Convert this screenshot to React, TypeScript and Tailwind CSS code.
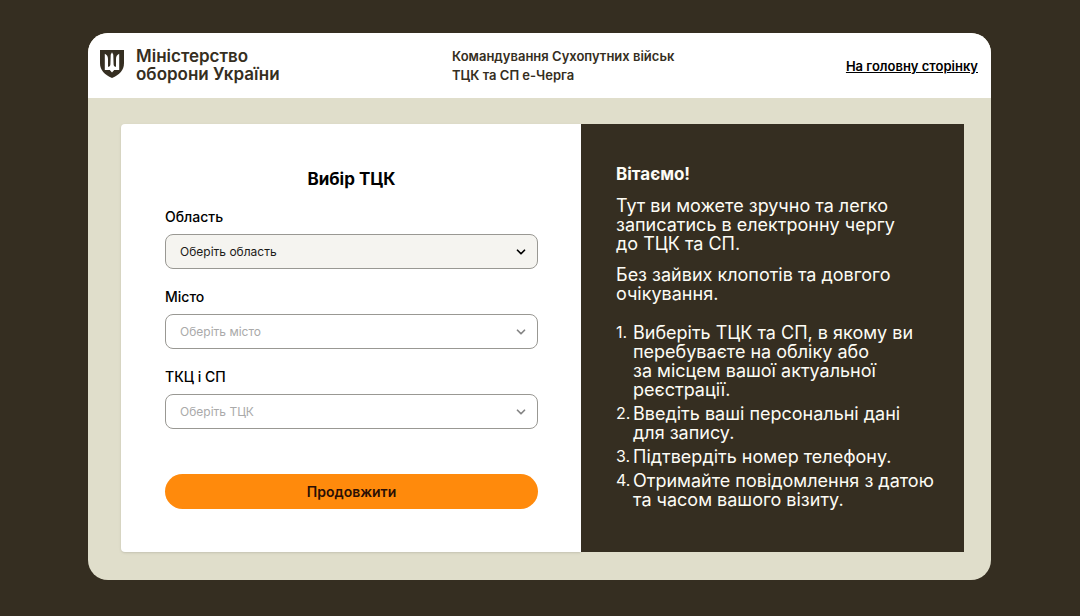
import { useState } from "react";
import { ChevronDown } from "lucide-react";

/* =========================
   DATA
========================= */
type Field = {
  id: string;
  label: string;
  placeholder: string;
  options: string[];
};

const FIELDS: Field[] = [
  {
    id: "region",
    label: "Область",
    placeholder: "Оберіть область",
    options: ["Київська", "Львівська", "Одеська"],
  },
  { id: "city", label: "Місто", placeholder: "Оберіть місто", options: [] },
  { id: "center", label: "ТКЦ і СП", placeholder: "Оберіть ТЦК", options: [] },
];

const STEPS: string[][] = [
  [
    "Виберіть ТЦК та СП, в якому ви",
    "перебуваєте на обліку або",
    "за місцем вашої актуальної",
    "реєстрації.",
  ],
  ["Введіть ваші персональні дані", "для запису."],
  ["Підтвердіть номер телефону."],
  ["Отримайте повідомлення з датою", "та часом вашого візиту."],
];

/* =========================
   SMALL PARTS
========================= */
function Emblem() {
  return (
    <svg viewBox="0 0 24 28" className="h-7 w-6 shrink-0" aria-hidden="true">
      <path d="M0 0H24V13C24 20.5 19.5 24.5 12 28C4.5 24.5 0 20.5 0 13Z" fill="#352e21" />
      <path
        d="M4.8 3.8C7 4.8 8 6.600 8 9V16.800C9.400 16.600 10.200 15.800 10.400 14.400L10.700 4.800L12 2.200L13.300 4.800L13.600 14.400C13.800 15.800 14.600 16.600 16 16.800V9C16 6.600 17 4.800 19.200 3.800V20H14.200L12 22.600L9.800 20H4.800Z"
        fill="#fff"
      />
    </svg>
  );
}

function Lines({ lines }: { lines: string[] }) {
  return (
    <>
      {lines.map((line) => (
        <span key={line} className="block">
          {line}
        </span>
      ))}
    </>
  );
}

/* =========================
   QUEUE PAGE
========================= */
export default function App() {
  const [region, setRegion] = useState("");

  return (
    <div className="min-h-screen bg-[#352e21] pt-[33px] pr-[89px] pb-9 pl-[88px] font-['Inter',sans-serif]">
      <div className="overflow-hidden rounded-[20px] bg-[#e0decb]">
        {/* HEADER */}
        <header className="grid grid-cols-[352px_1fr_auto] items-center bg-white py-3 pr-[13px] pl-3 text-[#352e21]">
          <div className="flex items-center gap-3 pb-[3px]">
            <Emblem />
            <div className="pt-px text-[17px] leading-[18px] font-semibold">
              Міністерство
              <br />
              оборони України
            </div>
          </div>
          <div className="pt-[2px] pb-px text-[13px] leading-[19px] font-semibold">
            Командування Сухопутних військ
            <br />
            ТЦК та СП е-Черга
          </div>
          <a href="#" className="text-[13px] leading-5 font-semibold text-black underline">
            На головну сторінку
          </a>
        </header>

        {/* CONTENT */}
        <main className="grid grid-cols-[460fr_383fr] pt-[26px] pr-[27px] pb-7 pl-[33px]">
          <form
            className="rounded-l bg-white pt-11 pr-[43px] pb-[43px] pl-11 shadow-sm"
            onSubmit={(e) => e.preventDefault()}
          >
            <h1 className="mb-[17px] text-center text-[17px] leading-[22px] font-bold text-black">
              Вибір ТЦК
            </h1>

            <div className="flex flex-col gap-[18px]">
              {FIELDS.map((f) => {
                const disabled = f.options.length === 0;
                return (
                  <div key={f.id}>
                    <label htmlFor={f.id} className="block text-sm leading-5 font-medium text-black">
                      {f.label}
                    </label>
                    <div className="relative mt-[7px]">
                      <select
                        id={f.id}
                        disabled={disabled}
                        value={disabled ? "" : region}
                        onChange={(e) => setRegion(e.target.value)}
                        className={`block h-[35px] w-full appearance-none rounded-lg border border-[#999893] px-[14px] text-xs opacity-100 ${
                          disabled ? "bg-white text-[#aaaaaa]" : "bg-[#f5f4f0] text-[#1c1b18]"
                        }`}
                      >
                        <option value="">{f.placeholder}</option>
                        {f.options.map((o) => (
                          <option key={o}>{o}</option>
                        ))}
                      </select>
                      <ChevronDown
                        size={14}
                        strokeWidth={3}
                        className={`pointer-events-none absolute top-[11px] right-[10px] ${
                          disabled ? "text-[#858585]" : "text-black"
                        }`}
                      />
                    </div>
                  </div>
                );
              })}
            </div>

            <button
              type="submit"
              className="mt-[45px] block h-[35px] w-full rounded-full bg-[#ff8a0c] text-sm font-semibold text-[#2a0f05]"
            >
              Продовжити
            </button>
          </form>

          {/* WELCOME */}
          <section className="bg-[#352e21] pt-[41px] pl-[35px] text-lg leading-[19px] whitespace-nowrap text-[#fdfcf5]">
            <h2 className="text-[17px] leading-[19px] font-bold">Вітаємо!</h2>
            <p className="mt-3">
              <Lines
                lines={["Тут ви можете зручно та легко", "записатись в електронну чергу", "до ТЦК та СП."]}
              />
            </p>
            <p className="mt-3">
              <Lines lines={["Без зайвих клопотів та довгого", "очікування."]} />
            </p>
            <ol className="mt-5 flex flex-col gap-[5px]">
              {STEPS.map((lines, i) => (
                <li key={lines[0]} className="flex">
                  <span className="w-[17px] shrink-0 text-base leading-[19px]">{i + 1}.</span>
                  <div>
                    <Lines lines={lines} />
                  </div>
                </li>
              ))}
            </ol>
          </section>
        </main>
      </div>
    </div>
  );
}
